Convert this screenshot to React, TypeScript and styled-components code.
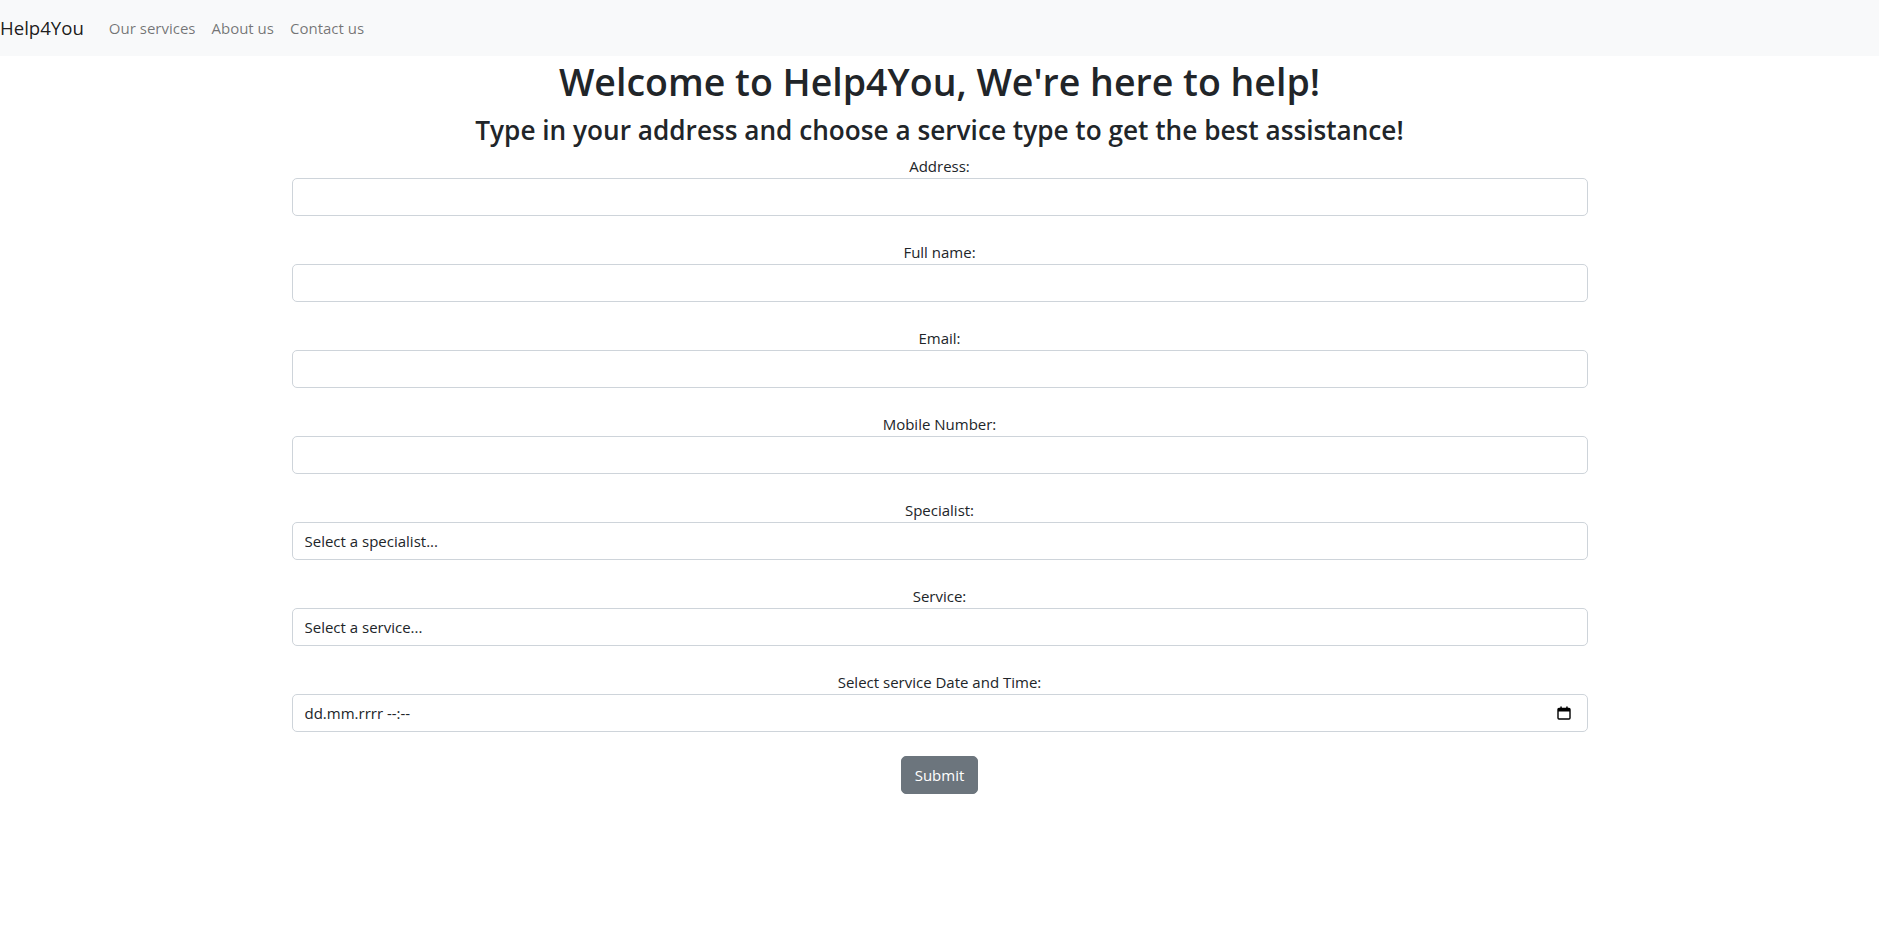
import React from "react";
import styled, { createGlobalStyle } from "styled-components";

const GlobalStyle = createGlobalStyle`
  *, *::before, *::after { box-sizing: border-box; }
  body {
    margin: 0;
    font-family: "Open Sans", "Noto Sans", "Liberation Sans", sans-serif;
    font-size: 15px;
    line-height: 24px;
    color: #212529;
    background: #ffffff;
  }
`;

const NavBar = styled.nav`
  background: #f8f9fa;
  padding: 8px 0;
  display: flex;
  align-items: center;
  height: 56px;
`;

const Brand = styled.a`
  font-size: 18.6px;
  line-height: 30px;
  padding: 5px 0;
  margin-right: 17px;
  color: rgba(0, 0, 0, 0.9);
  text-decoration: none;
`;

const NavList = styled.div`
  display: flex;
  align-items: center;
`;

const NavLink = styled.a`
  padding: 8px;
  color: rgba(0, 0, 0, 0.55);
  text-decoration: none;
  font-size: 15px;
  line-height: 24px;
`;

const Container = styled.main`
  max-width: 1320px;
  margin: 0 auto;
  padding: 0 12px;
  text-align: center;
`;

const Title = styled.h1`
  font-size: 37.5px;
  font-weight: 600;
  line-height: 48px;
  padding-top: 2px;
  margin: 0 0 6px;
`;

const Subtitle = styled.h3`
  font-size: 26.2px;
  font-weight: 600;
  line-height: 33.6px;
  padding-top: 2px;
  margin: 0 0 6px;
`;

const Form = styled.form`
  display: flex;
  flex-direction: column;
  gap: 24px;
`;

const Field = styled.div`
  display: flex;
  flex-direction: column;
`;

const Label = styled.label`
  display: block;
  line-height: 24px;
  font-size: 15px;
  text-align: center;
`;

const controlBase = `
  display: block;
  width: 100%;
  height: 38px;
  padding: 6px 12px;
  font-family: inherit;
  font-size: 15px;
  line-height: 24px;
  color: #212529;
  background: #ffffff;
  border: 1px solid #ced4da;
  border-radius: 5px;
  text-align: left;
  outline: none;
`;

const Input = styled.input`
  ${controlBase}
`;

const Select = styled.select`
  ${controlBase}
  appearance: none;
  -webkit-appearance: none;
`;

const DateField = styled.div`
  ${controlBase}
  display: flex;
  align-items: center;
  justify-content: space-between;
  padding: 6px 16px 6px 12px;
`;

const DateText = styled.span`
  color: #212529;
`;

const SubmitButton = styled.button`
  align-self: center;
  height: 38px;
  padding: 6px 13px;
  font-family: inherit;
  font-size: 15px;
  line-height: 24px;
  color: #ffffff;
  background: #6c757d;
  border: 1px solid #6c757d;
  border-radius: 5px;
  cursor: pointer;
`;

const CalendarIcon = () => (
  <svg width="14" height="14" viewBox="0 0 14 14" aria-hidden="true">
    <rect x="1" y="2.5" width="12" height="10.5" rx="1" fill="none" stroke="#000" strokeWidth="1.4" />
    <rect x="1" y="2.5" width="12" height="3" fill="#000" />
    <rect x="3.3" y="0.5" width="1.5" height="3" fill="#000" />
    <rect x="9.2" y="0.5" width="1.5" height="3" fill="#000" />
  </svg>
);

const fields = [
  { id: "address", label: "Address:" },
  { id: "fullname", label: "Full name:" },
  { id: "email", label: "Email:" },
  { id: "mobile", label: "Mobile Number:" },
];

export default function App() {
  return (
    <>
      <GlobalStyle />
      <NavBar>
        <Brand href="#">Help4You</Brand>
        <NavList>
          <NavLink href="#">Our services</NavLink>
          <NavLink href="#">About us</NavLink>
          <NavLink href="#">Contact us</NavLink>
        </NavList>
      </NavBar>
      <Container>
        <Title>Welcome to Help4You, We're here to help!</Title>
        <Subtitle>Type in your address and choose a service type to get the best assistance!</Subtitle>
        <Form onSubmit={(e) => e.preventDefault()}>
          {fields.map((f) => (
            <Field key={f.id}>
              <Label htmlFor={f.id}>{f.label}</Label>
              <Input id={f.id} type="text" />
            </Field>
          ))}
          <Field>
            <Label htmlFor="specialist">Specialist:</Label>
            <Select id="specialist" defaultValue="">
              <option value="">Select a specialist...</option>
            </Select>
          </Field>
          <Field>
            <Label htmlFor="service">Service:</Label>
            <Select id="service" defaultValue="">
              <option value="">Select a service...</option>
            </Select>
          </Field>
          <Field>
            <Label>Select service Date and Time:</Label>
            <DateField>
              <DateText>dd.mm.rrrr --:--</DateText>
              <CalendarIcon />
            </DateField>
          </Field>
          <SubmitButton type="submit">Submit</SubmitButton>
        </Form>
      </Container>
    </>
  );
}
